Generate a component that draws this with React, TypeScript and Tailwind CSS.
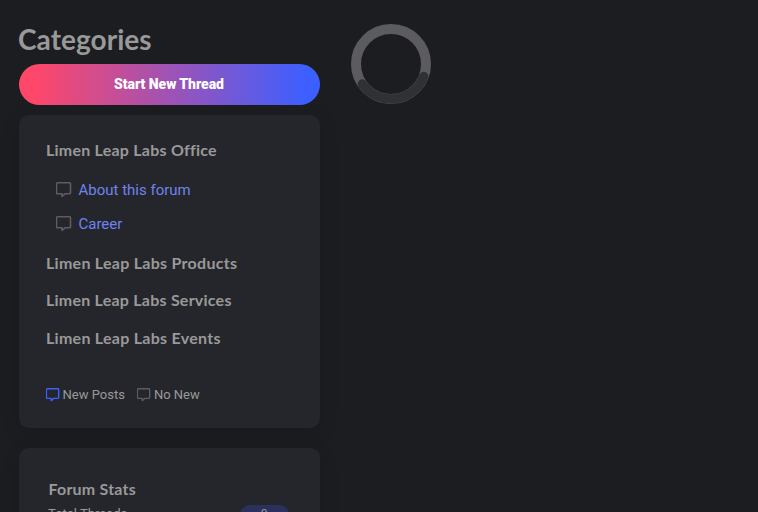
import React from "react";

interface CommentIconProps {
  className: string;
}

interface Category {
  name: string;
  className: string;
  forums?: string[];
}

const HEADING = "font-['Lato','Noto_Sans',sans-serif] font-bold text-[#999999]";

const CATEGORIES: Category[] = [
  {
    name: "Limen Leap Labs Office",
    className: "tracking-[0.23px] mb-[9.5px]",
    forums: ["About this forum", "Career"],
  },
  { name: "Limen Leap Labs Products", className: "tracking-[0.27px] mb-[13px]" },
  { name: "Limen Leap Labs Services", className: "tracking-[0.23px] mb-3.5" },
  { name: "Limen Leap Labs Events", className: "tracking-[0.27px] mb-[13px]" },
];

function CommentIcon({ className }: CommentIconProps) {
  return (
    <svg viewBox="0 0 16 16" fill="none" stroke="currentColor" strokeWidth="1.6" strokeLinejoin="round" className={className}>
      <path d="M1.4.8h12.2a.9.9 0 0 1 .9.9v9.2a.9.9 0 0 1-.9.9H9.1L6 14.4v-2.6H1.4a.9.9 0 0 1-.9-.9V1.7a.9.9 0 0 1 .9-.9Z" />
    </svg>
  );
}

function Spinner() {
  return (
    <svg viewBox="0 0 80 80" fill="none" className="w-20 h-20 mt-6 ml-[31px]">
      <circle cx="40" cy="40" r="35" stroke="#5c5c60" strokeWidth="10" />
      <path d="M72.7 52.5A35 35 0 0 1 11.3 60" stroke="#303135" strokeWidth="9.4" strokeLinecap="round" />
    </svg>
  );
}

export default function App() {
  return (
    <div className="flex items-start w-full h-[512px] overflow-hidden bg-[#1c1d21] font-['Roboto',sans-serif]">
      <aside className="w-[301px] ml-[19px] shrink-0">
        <h1 className={`${HEADING} -ml-px mt-[19px] h-[45px] text-[28px] leading-[40px] tracking-[0.05px]`}>
          Categories
        </h1>
        <button className="block w-full h-[41px] pr-px pb-0.5 rounded-full bg-linear-to-r/srgb from-[#ff476a] to-[#3e5fff] from-5% to-95% text-white text-sm font-black tracking-[-0.04px]">
          Start New Thread
        </button>

        <section className="mt-2.5 h-[313px] rounded-[10px] bg-[#25262b] pt-[22.5px] px-[27px] shadow-[0_5px_20px_rgba(0,0,0,0.12)]">
          {CATEGORIES.map((category) => (
            <div key={category.name} className={category.className}>
              <h2 className={`${HEADING} text-base leading-6`}>{category.name}</h2>
              {category.forums && (
                <ul className="pt-[11.5px] pl-[9.5px] tracking-normal">
                  {category.forums.map((forum) => (
                    <li key={forum} className="flex items-center h-[34px]">
                      <CommentIcon className="w-4 h-4 mr-[7px] text-[#5c5d61]" />
                      <a href="#" className="text-[15px] text-[#6d84f0]">{forum}</a>
                    </li>
                  ))}
                </ul>
              )}
            </div>
          ))}

          {/* Legend */}
          <div className="flex items-center mt-[35px] -ml-[0.5px] h-5 text-[13px] text-[#999999]">
            <CommentIcon className="w-3.5 h-3.5 mr-[3px] text-[#3e5fff]" />
            <span className="mr-3">New Posts</span>
            <CommentIcon className="w-3.5 h-3.5 mr-[3px] text-[#5c5d61]" />
            <span>No New</span>
          </div>
        </section>

        <section className="mt-5 h-[200px] rounded-[10px] bg-[#25262b] pt-[29px] px-[29.5px] shadow-[0_5px_20px_rgba(0,0,0,0.12)]">
          <h2 className={`${HEADING} text-base leading-6 tracking-[0.2px]`}>Forum Stats</h2>
          <div className="flex justify-between mt-1 text-[13px] text-[#999999]">
            <span className="-ml-[0.5px] leading-[17px]">Total Threads</span>
            <span className="w-[49px] h-5 mr-0.5 rounded-full bg-[#2b305c] text-center text-[12px] leading-[19px]">0</span>
          </div>
        </section>
      </aside>
      <Spinner />
    </div>
  );
}
